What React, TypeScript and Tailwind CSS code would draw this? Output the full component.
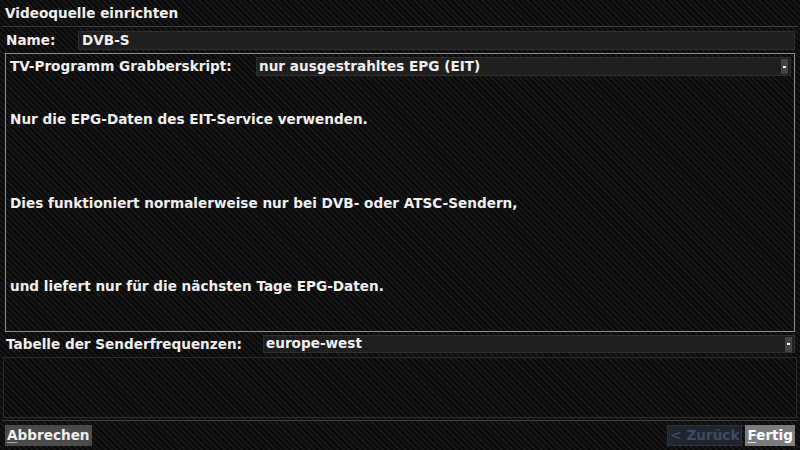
import React from 'react';

const font = "font-['DejaVu_Sans',sans-serif] font-bold text-[13.6px] text-[#f0f0f0]";

function SelectBox({ value, className }: { value: string; className: string }) {
  return (
    <div className={`flex items-center bg-[#1f1f1f] border border-[#2e2e2e] pl-[2px] pr-[2px] ${className}`}>
      <span className="flex-1 leading-none">{value}</span>
      <span className="flex h-[15px] w-[7px] items-center justify-center bg-[#444] rounded-[1px]">
        <span className="block h-[2px] w-[3px] bg-white" />
      </span>
    </div>
  );
}

export default function App() {
  const description = [
    'Nur die EPG-Daten des EIT-Service verwenden.',
    'Dies funktioniert normalerweise nur bei DVB- oder ATSC-Sendern,',
    'und liefert nur für die nächsten Tage EPG-Daten.',
  ];

  return (
    <div
      className={`flex h-[450px] w-[800px] flex-col overflow-hidden bg-[repeating-linear-gradient(45deg,#0a0a0a_0px,#0a0a0a_2px,#171717_2px,#171717_4px)] ${font}`}
    >
      <div className="flex h-[26px] items-center px-[5px]">Videoquelle einrichten</div>
      <div className="mx-[2px] h-px bg-[#3c3c3c]" />

      <div className="mt-[4px] flex h-[19px] items-center pl-[6px] pr-[5px]">
        <span className="w-[72px]">Name:</span>
        <div className="flex h-full flex-1 items-center bg-[#1f1f1f] border border-[#2e2e2e] pl-[3px]">DVB-S</div>
      </div>

      <div className="mx-[5px] mt-[3px] flex h-[279px] flex-col border border-[#8c8c8c] px-[4px] pt-[3px]">
        <div className="flex h-[19px] items-center">
          <span className="w-[246px]">TV-Programm Grabberskript:</span>
          <SelectBox value="nur ausgestrahltes EPG (EIT)" className="h-full flex-1 mr-[-1px]" />
        </div>
        <div className="mt-[35px] leading-[16px]">{description[0]}</div>
        <div className="mt-[68px] leading-[16px]">{description[1]}</div>
        <div className="mt-[67px] leading-[16px]">{description[2]}</div>
      </div>

      <div className="mt-[3px] flex h-[18px] items-center pl-[6px] pr-[5px]">
        <span className="w-[257px]">Tabelle der Senderfrequenzen:</span>
        <SelectBox value="europe-west" className="h-full flex-1" />
      </div>

      <div className="mx-[3px] mt-[4px] h-[61px] border border-[#2c2c2c]" />
      <div className="mx-[2px] mt-[2px] h-px bg-[#3c3c3c]" />

      <div className="mt-[4px] flex h-[21px] items-center px-[5px]">
        <div className="flex h-full items-center bg-[#4a4a4a] px-[2px]">
          <span>
            <span className="underline decoration-[#aaa] underline-offset-2">A</span>bbrechen
          </span>
        </div>
        <div className="flex-1" />
        <div className="flex h-full items-center bg-[#1e2430] border border-[#2a3344] px-[2px] text-[#3e4a60]">
          &lt; Zurück
        </div>
        <div className="ml-[3px] flex h-full items-center bg-[#7c7c7c] px-[2px] text-white">
          <span>
            <span className="underline decoration-[#ddd] underline-offset-2">F</span>ertig
          </span>
        </div>
      </div>
    </div>
  );
}
